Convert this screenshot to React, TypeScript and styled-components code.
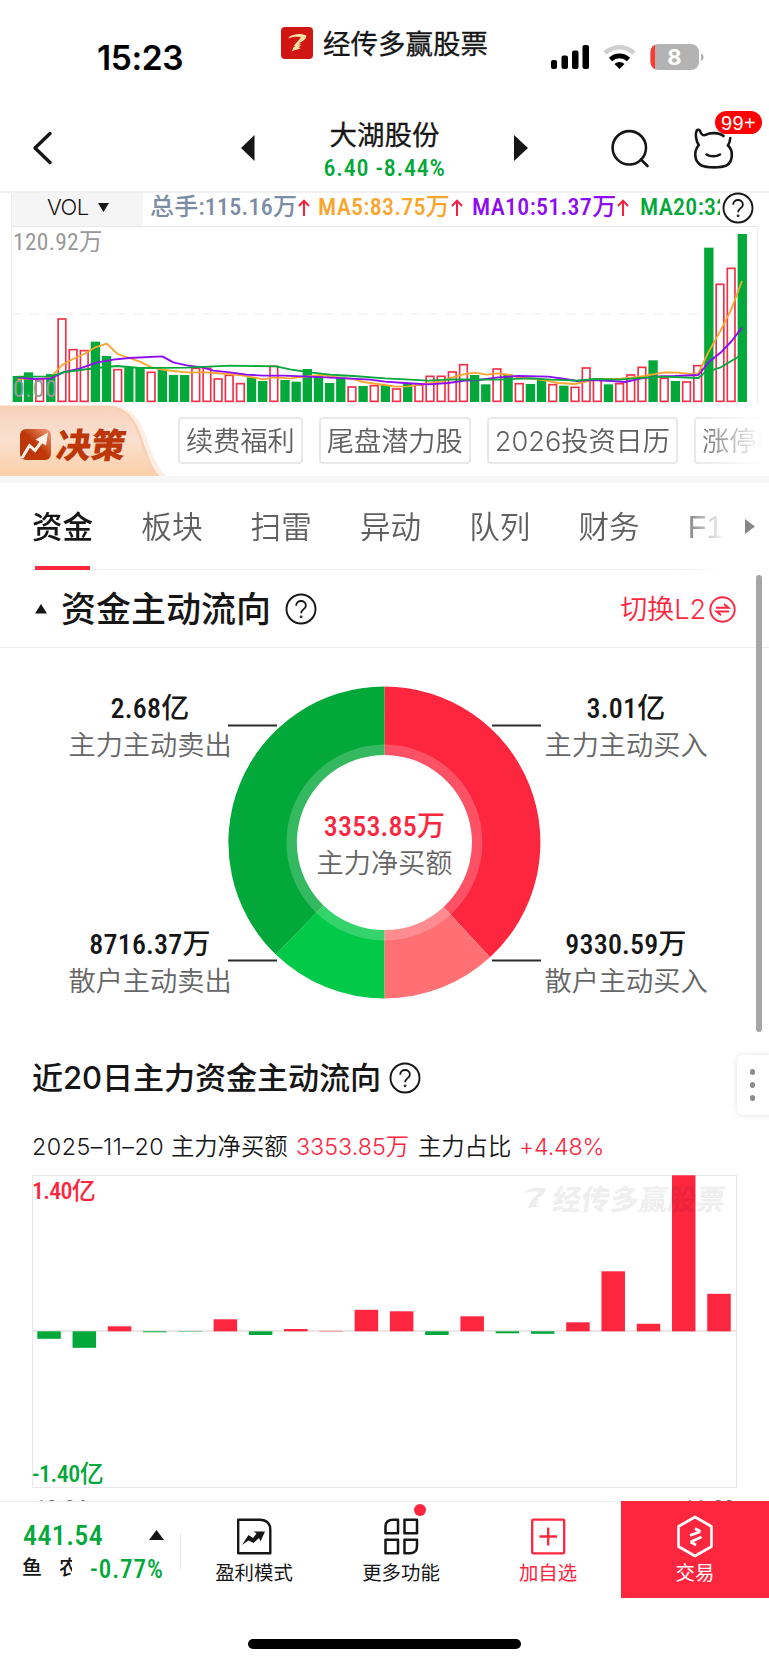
import React from "react";
import styled, { createGlobalStyle } from "styled-components";

const RED = "#fd263f";
const GREEN = "#02a83a";
const INK = "#161616";
const CJK = `"Noto Sans CJK SC", sans-serif`;

const Global = createGlobalStyle`
  html, body { margin: 0; padding: 0; background: #fff; }
  * { box-sizing: border-box; }
`;

const Screen = styled.div`
  position: relative;
  width: 769px;
  height: 1665px;
  overflow: hidden;
  background: #fff;
  color: ${INK};
  font-family: "Liberation Sans", ${CJK};
  display: flex;
  flex-direction: column;
  white-space: nowrap;
`;

const Num = styled.span<{ $size: number; $color?: string; $weight?: number; $ls?: number }>`
  font-family: Roboto, ${CJK};
  font-size: ${(p) => p.$size}px;
  font-weight: ${(p) => p.$weight ?? 470};
  font-stretch: 85%;
  letter-spacing: ${(p) => p.$ls ?? 0.008}em;
  color: ${(p) => p.$color ?? "inherit"};
`;

/* ---------- status bar ---------- */
const StatusBar = styled.div`
  height: 100px;
  display: flex;
  align-items: flex-start;
`;
const Clock = styled.div`
  width: 281px;
  padding: 38px 0 0 97px;
  font: 600 33.5px/40px Inter, sans-serif;
  letter-spacing: -0.4px;
  color: #000;
`;
const Brand = styled.div`
  width: 270px;
  padding-top: 27px;
  display: flex;
  gap: 10px;
  font: 400 27.5px/32px ${CJK};
  -webkit-text-stroke: 0.3px ${INK};
  svg { flex: none; }
  span { margin-top: -1px; }
`;
const StatusIcons = styled.svg`
  display: block;
  margin-top: 40px;
`;

/* ---------- navigation ---------- */
const Nav = styled.div`
  height: 91px;
  display: flex;
  align-items: flex-start;
  padding-top: 8px;
`;
const NavSide = styled.svg`
  display: block;
  flex: none;
`;
const StockTitle = styled.div`
  width: 259px;
  display: flex;
  flex-direction: column;
  align-items: center;
  padding-top: 7px;
  font: 400 27.5px/36px ${CJK};
  -webkit-text-stroke: 0.3px ${INK};
`;
const Quote = styled.div`
  line-height: 26px;
  -webkit-text-stroke: 0;
  color: ${GREEN};
`;
const NavActions = styled.div`
  position: relative;
  width: 241px;
  height: 83px;
`;
const Badge = styled.div`
  position: absolute;
  left: 187px;
  top: 3px;
  width: 47px;
  height: 23px;
  border-radius: 12px;
  background: #fe0302;
  color: #fff;
  font: 400 20px/24px "Liberation Sans", sans-serif;
  letter-spacing: 0.3px;
  text-align: center;
`;

/* ---------- volume chart ---------- */
const VolumePanel = styled.section`
  height: 217px;
  border-top: 2px solid #f1f1f1;
  padding-left: 11px;
`;
const IndicatorRow = styled.div`
  width: 747px;
  height: 34px;
  display: flex;
  align-items: flex-start;
  border-left: 1px solid #ededed;
  border-bottom: 1px solid #e9e9e9;
  > svg { margin: -1px 0 0 2px; }
`;
const VolSelect = styled.div`
  width: 131px;
  height: 33px;
  padding: 0 0 4px 35px;
  display: flex;
  align-items: center;
  gap: 9px;
  background: #f5f5f5;
  font: 350 22px/29px Inter, sans-serif;
  letter-spacing: -0.5px;
`;
const Indicators = styled.div`
  width: 577px;
  padding-left: 7px;
  overflow: hidden;
  display: flex;
  line-height: 29px;
`;
const Indicator = styled.div<{ $w: number; $color: string }>`
  width: ${(p) => p.$w}px;
  flex: none;
  display: flex;
  color: ${(p) => p.$color};
  svg { flex: none; margin: 6px 0 0 1px; }
`;
const ChartArea = styled.div`
  position: relative;
  width: 747px;
  height: 177px;
  border: 1px solid #f0f0f0;
  border-top: 0;
  border-bottom-color: #fafafa;
`;
const ChartSvg = styled.svg`
  position: absolute;
  left: -12px;
  top: -42px;
`;
const AxisLabel = styled.div<{ $top: number }>`
  position: absolute;
  left: 1px;
  top: ${(p) => p.$top}px;
  line-height: 26px;
  color: #999;
`;

/* ---------- strategy strip ---------- */
const Strip = styled.section`
  height: 68px;
  display: flex;
  align-items: flex-start;
`;
const Banner = styled.div`
  position: relative;
  width: 178px;
  height: 68px;
  flex: none;
  svg { position: absolute; left: 0; top: -3px; }
`;
const BannerText = styled.div`
  position: absolute;
  left: 57px;
  top: 15px;
  font: 900 34.5px/40px ${CJK};
  color: #bd3708;
  transform: skewX(-8deg);
`;
const Chips = styled.div`
  width: 591px;
  padding-top: 9px;
  display: flex;
  gap: 16px;
  overflow: hidden;
  mask-image: linear-gradient(90deg, #000 87%, transparent 99%);
`;
const Chip = styled.div`
  flex: none;
  height: 47px;
  padding: 0 6px;
  border: 2px solid #e8e8e8;
  border-radius: 4px;
  font: 350 27.2px/46px Inter, ${CJK};
  color: #606060;
`;

/* ---------- tabs ---------- */
const Tabs = styled.nav`
  height: 95px;
  border-top: 7px solid #f6f6f6;
  padding-left: 32px;
  display: flex;
`;
const TabList = styled.div`
  width: 693px;
  height: 88px;
  overflow: hidden;
  display: flex;
  mask-image: linear-gradient(90deg, #000 93%, transparent 100%);
  background: linear-gradient(#ededed, #ededed) 0 86px / 100% 1px no-repeat;
`;
const Tab = styled.div<{ $on?: boolean }>`
  position: relative;
  width: 109.3px;
  flex: none;
  height: 87px;
  font: ${(p) => (p.$on ? 500 : 350)} 30.6px/88px "Liberation Sans", ${CJK};
  color: ${(p) => (p.$on ? INK : "#606060")};
  &::after {
    content: "";
    display: ${(p) => (p.$on ? "block" : "none")};
    position: absolute;
    left: 3px;
    bottom: 0;
    width: 55px;
    height: 4px;
    background: ${RED};
  }
`;
const TabMore = styled.svg`
  margin: 36px 0 0 20px;
`;

/* ---------- sections ---------- */
const SectionHead = styled.div`
  height: 77px;
  border-bottom: 1px solid #ededed;
  padding: 0 33px 0 35px;
  display: flex;
  align-items: center;
`;
const SectionTitle = styled.h2`
  margin: -5px 0 0 14px;
  width: 224px;
  font: 500 35px/48px ${CJK};
`;
const SwitchLink = styled.div`
  margin-left: auto;
  display: flex;
  align-items: center;
  gap: 3px;
  color: ${RED};
  font: 350 27px/40px Inter, ${CJK};
  span { margin-top: 2px; }
`;

const Flow = styled.section`
  height: 396px;
  display: flex;
`;
const FlowCol = styled.div<{ $side: "l" | "r" }>`
  width: ${(p) => (p.$side === "l" ? 228 : 229)}px;
  padding: ${(p) => (p.$side === "l" ? "42px 0 0 69px" : "42px 0 0 4px")};
`;
const FlowItem = styled.div`
  height: 236px;
  width: 162px;
  display: flex;
  flex-direction: column;
  align-items: center;
`;
const FlowValue = styled.div`
  line-height: 37px;
  height: 36px;
`;
const FlowLabel = styled.div`
  font: 350 27.2px/34px ${CJK};
  color: #666;
`;
const DonutBox = styled.div`
  position: relative;
  width: 313px;
  padding-top: 38px;
  svg { display: block; }
`;
const DonutCenter = styled.div`
  position: absolute;
  inset: 160px 0 auto;
  display: flex;
  flex-direction: column;
  align-items: center;
`;

const HistoryHead = styled.div`
  height: 75px;
  padding: 0 0 7px 32px;
  display: flex;
  align-items: center;
  gap: 8px;
  h2 {
    margin: 0;
    font: 500 31.1px/44px Inter, ${CJK};
    letter-spacing: -0.1px;
  }
`;
const Summary = styled.div`
  height: 56px;
  padding-left: 32px;
  display: flex;
  gap: 9px;
  font: 350 23.3px/55px Inter, ${CJK};
`;
const Cell = styled.span<{ $w: number; $red?: boolean; $ls?: number }>`
  width: ${(p) => p.$w}px;
  flex: none;
  color: ${(p) => (p.$red ? RED : INK)};
  letter-spacing: ${(p) => p.$ls ?? 0}px;
`;
const HistoryChart = styled.div`
  position: relative;
  width: 705px;
  height: 313px;
  margin-left: 32px;
  border: 1px solid #e8e8e8;
  display: flex;
  flex-direction: column;
  justify-content: space-between;
  > svg { position: absolute; left: -1px; top: -1px; }
`;
const Bound = styled.div<{ $color: string }>`
  line-height: 30px;
  height: 28px;
  margin-left: -1px;
  color: ${(p) => p.$color};
`;
const Watermark = styled.div`
  position: absolute;
  left: 486px;
  top: 4px;
  display: flex;
  align-items: center;
  gap: 3px;
  color: rgba(0, 0, 0, 0.07);
  font: 900 28.8px/36px ${CJK};
  span { transform: skewX(-8deg); }
`;
const Dates = styled.div`
  height: 13px;
  overflow: hidden;
  padding: 5px 34px 0 35px;
  display: flex;
  justify-content: space-between;
  line-height: 32px;
  color: #666;
`;

/* ---------- bottom bar ---------- */
const BottomBar = styled.footer`
  height: 97px;
  display: flex;
  border-top: 1px solid #ececec;
`;
const IndexTicker = styled.div`
  width: 180px;
  padding: 16px 16px 0 23px;
`;
const TickerRow = styled.div`
  display: flex;
  justify-content: space-between;
  align-items: center;
  height: 34px;
  color: ${GREEN};
`;
const TickerName = styled.div<{ $w: number; $shift: number }>`
  width: ${(p) => p.$w}px;
  height: 30px;
  overflow: hidden;
  color: ${INK};
  font: 500 20px/26px ${CJK};
  span { margin-left: ${(p) => p.$shift}px; }
`;
const Divider = styled.div`
  width: 1px;
  height: 36px;
  margin-top: 31px;
  background: #e6e6e6;
`;
const Action = styled.div<{ $w: number; $color: string; $bg?: string }>`
  position: relative;
  width: ${(p) => p.$w}px;
  margin-top: -1px;
  height: 97px;
  padding-top: 11px;
  display: flex;
  flex-direction: column;
  align-items: center;
  background: ${(p) => p.$bg ?? "transparent"};
  color: ${(p) => p.$color};
  font: 400 19.4px/26px ${CJK};
  svg { display: block; height: 50px; margin-bottom: -3px; }
`;
const Dot = styled.div`
  position: absolute;
  left: 87px;
  top: 3px;
  width: 12px;
  height: 12px;
  border-radius: 50%;
  background: ${RED};
`;
const HomeIndicator = styled.div`
  width: 273px;
  height: 10px;
  margin: 41px 0 0 248px;
  border-radius: 5px;
  background: #000;
`;

/* ---------- floating parts ---------- */
const ScrollThumb = styled.div`
  position: absolute;
  left: 756px;
  top: 575px;
  width: 6px;
  height: 457px;
  border-radius: 3px;
  background: #a6a6a6;
`;
const FloatMenu = styled.div`
  position: absolute;
  left: 737px;
  top: 1055px;
  width: 40px;
  height: 60px;
  border-radius: 6px;
  background: #fff;
  box-shadow: 0 0 6px rgba(0, 0, 0, 0.12);
  padding: 14px 0 0 12.5px;
  display: flex;
  flex-direction: column;
  gap: 7.5px;
  i {
    width: 5.6px;
    height: 5.6px;
    border-radius: 50%;
    background: #8c8c8c;
  }
`;

/* volume bars: [direction, top], baseline at 650, three units per pixel */
const VOLUME: [string, number][] = [
  ["g", 573], ["g", 562], ["r", 582], ["g", 567], ["r", 400], ["r", 492], ["r", 495], ["g", 470],
  ["g", 513], ["r", 552], ["g", 547], ["g", 547], ["r", 560], ["g", 553], ["g", 570], ["g", 570],
  ["r", 548], ["r", 548], ["r", 580], ["r", 569], ["r", 594], ["g", 577], ["g", 588], ["r", 542],
  ["g", 585], ["g", 590], ["g", 552], ["g", 573], ["g", 594], ["g", 575], ["r", 604], ["g", 603],
  ["r", 600], ["g", 600], ["r", 610], ["g", 597], ["r", 598], ["r", 572], ["r", 572], ["r", 559],
  ["r", 537], ["g", 570], ["g", 598], ["r", 550], ["g", 568], ["r", 594], ["g", 597], ["g", 585],
  ["r", 597], ["g", 602], ["r", 605], ["r", 547], ["r", 580], ["g", 598], ["r", 594], ["r", 568],
  ["r", 545], ["g", 526], ["r", 578], ["g", 588], ["r", 589], ["r", 540], ["g", 188], ["r", 296],
  ["r", 248], ["g", 147],
];
const MA5 =
  "52,583 85,580 118,583 152,577 186,540 219,522 253,507 286,487 320,476 353,507 387,519 420,530 454,547 487,554 520,558 560,562 620,562 680,567 720,570 760,577 788,583 820,577 870,580 920,574 960,570 1020,578 1060,582 1090,591 1155,600 1185,605 1225,604 1275,596 1325,590 1355,578 1390,568 1425,563 1460,569 1495,565 1530,570 1555,577 1605,582 1635,586 1675,594 1725,597 1765,588 1805,582 1855,582 1915,576 1955,569 1995,562 2035,563 2070,567 2095,565 2126,500 2160,440 2193,375 2226,288";
const MA10 =
  "52,577 100,582 152,580 190,562 240,550 290,533 340,524 387,519 487,514 520,532 560,541 610,548 640,557 690,562 740,569 790,572 850,572 930,575 1040,580 1110,584 1155,590 1215,594 1285,598 1345,594 1395,587 1435,585 1495,577 1555,573 1645,575 1695,582 1730,588 1775,585 1835,588 1875,591 1925,580 1975,574 2025,573 2095,570 2126,532 2165,500 2195,468 2226,428";
const MA20 =
  "52,575 152,574 190,562 240,555 290,549 350,543 420,549 560,548 690,542 828,544 870,553 930,562 990,569 1060,573 1155,580 1215,583 1285,587 1355,583 1485,584 1595,580 1655,584 1730,587 1785,582 1855,584 1935,578 1985,575 2095,579 2115,562 2160,548 2215,515";

const FLOW20 = [
  -7.5, -16.5, 5, -1, -0.4, 12, -3.7, 2.3, 0.4, 21.5, 20, -3.7, 15, -2, -2.5, 9, 60, 7.5, 156, 37.5,
];

const Help = ({ r = 14.5, size = 22 }: { r?: number; size?: number }) => (
  <svg width="32" height="32" viewBox="-16 -16 32 32" style={{ flex: "none" }}>
    <circle r={r} fill="#fff" stroke={INK} strokeWidth="1.9" />
    <g transform={`scale(${size / 22})`} fill="none" stroke={INK} strokeWidth="1.8">
      <path d="M-4.8 -3.2C-4.8 -9.6 4.9 -9.6 4.9 -3.3C4.9 0 0.1 0.4 0.1 4.2" />
      <circle cx="0.1" cy="7.8" r="0.5" />
    </g>
  </svg>
);

const UpArrow = () => (
  <svg width="12" height="18" viewBox="0 0 12 18" fill="none" stroke="#f5203f" strokeWidth="2">
    <path d="M6 17V2M1 7L6 1.6L11 7" />
  </svg>
);

const BrandMark = ({ size, fill }: { size: number; fill: string }) => (
  <svg width={size} height={size} viewBox="3 4 26 24" fill={fill}>
    <path d="M7 11.500C10 7.500 16 6.300 25.500 7.500C25.500 11 22.500 13.800 18.500 16L20 17.200L16.500 18.800L20.500 18.800L17 21L19.500 22.200C16.500 23.800 13.500 22.800 10 24.500C12.500 22.500 11 20.500 13.500 17.500C14.500 15.500 18 13.500 19.500 10.500C15 9.500 11 10.500 7 11.500Z" />
  </svg>
);

const arc = (r0: number, r1: number, a0: number, a1: number) => {
  const p = (r: number, a: number) =>
    `${(156.4 + r * Math.sin((a * Math.PI) / 180)).toFixed(2)} ${(156.5 - r * Math.cos((a * Math.PI) / 180)).toFixed(2)}`;
  return `M${p(r1, a0)}A${r1} ${r1} 0 0 1 ${p(r1, a1)}L${p(r0, a1)}A${r0} ${r0} 0 0 0 ${p(r0, a0)}Z`;
};

const SLICES: [number, number, string][] = [
  [0, 137.4, RED],
  [137.4, 180, "#ff7075"],
  [180, 224.1, "#02c947"],
  [224.1, 360, GREEN],
];

export default function App() {
  return (
    <Screen>
      <Global />
      <StatusBar>
        <Clock>15:23</Clock>
        <Brand>
          <svg width="32" height="32" viewBox="0 0 32 32">
            <rect width="32" height="32" rx="4" fill="#d01513" />
            <path fill="#fbe3a4" d="M7 11.500C8.500 9 12 7.500 16 7.200C19.500 6.800 23 7.300 25.500 8.800C25 12.500 21.500 14.500 18 16.200L20.300 16.800L17 18.300L20.500 18.500L17.500 20.300L19.500 21.200C16.500 23.300 13.500 22.300 10.500 24.500C12 22.800 11.500 21.800 12.200 20.500L14.500 19.800L12.800 19C14 16.500 18 13.500 19.800 10.200C15.500 9.300 11 10 7 11.500Z" />
          </svg>
          <span>经传多赢股票</span>
        </Brand>
        <StatusIcons width="160" height="36" viewBox="551 40 160 36">
          <g fill="#000">
            <rect x="551" y="60" width="6" height="9" rx="2" />
            <rect x="561.500" y="55.500" width="6.500" height="13.500" rx="2" />
            <rect x="572" y="50.500" width="6.500" height="18.500" rx="2" />
            <rect x="582.500" y="45" width="6.500" height="24" rx="2" />
          </g>
          <g fill="none" strokeWidth="4.6">
            <path d="M605 53.200A20.500 20.500 0 0 1 634 53.200" stroke="#cfcfcf" />
            <path d="M610.500 59.500A13 13 0 0 1 628.500 59.500" stroke="#000" />
          </g>
          <path d="M614.500 64A7.500 7.500 0 0 1 624.500 64L619.500 69Z" fill="#000" />
          <clipPath id="bat"><rect x="650.500" y="44" width="48.500" height="26" rx="8" /></clipPath>
          <g clipPath="url(#bat)">
            <rect x="650" y="44" width="50" height="26" fill="#b3b3b3" />
            <rect x="650" y="44" width="5" height="26" fill="#fd3b30" />
          </g>
          <path d="M701 53.500C704.500 54.500 704.500 60 701 61Z" fill="#b3b3b3" />
          <text x="674.500" y="65" textAnchor="middle" fontFamily="Inter" fontWeight="700" fontSize="22" fill="#fff">8</text>
        </StatusIcons>
      </StatusBar>

      <Nav>
        <NavSide width="255" height="80" viewBox="0 108 255 80">
          <path d="M50 133.500L35 148L50 162.500" fill="none" stroke={INK} strokeWidth="3.4" strokeLinecap="round" strokeLinejoin="round" />
          <path d="M241 148L254.500 135V161Z" fill={INK} />
        </NavSide>
        <StockTitle>
          <span>大湖股份</span>
          <Quote>
            <Num $size={24} $ls={0.032}>6.40 -8.44%</Num>
          </Quote>
        </StockTitle>
        <NavSide width="14" height="80" viewBox="514 108 14 80">
          <path d="M528 148L514 135V161Z" fill={INK} />
        </NavSide>
        <NavActions>
          <svg width="241" height="83" viewBox="528 108 241 83" fill="none" stroke={INK} strokeWidth="2.6" strokeLinecap="round">
            <circle cx="629.300" cy="147.800" r="16.700" />
            <path d="M641 159.500L647.500 166" />
            <path d="M706.500 134.500C709 132.800 719 132 723.500 136M730.300 138C730 141.500 729.500 143 728 145.500C734 151 732.500 162 726.500 165.500C721 168 707 168 701.500 165.500C694 161.500 693.500 151.500 698.700 145C695.800 140.500 695 133.500 696.800 130.500C697.600 129.300 699.500 129.600 700.300 131.500C701.200 135 703.500 136 706.500 134.500" />
            <path d="M706.500 154.500C710 156.800 716.500 156.800 720 154.500" />
          </svg>
          <Badge>99+</Badge>
        </NavActions>
      </Nav>

      <VolumePanel>
        <IndicatorRow>
          <VolSelect>
            VOL
            <svg width="11" height="9" viewBox="0 0 11 9"><path d="M0 0H11L5.500 9Z" fill={INK} /></svg>
          </VolSelect>
          <Indicators>
            <Indicator $w={168} $color="#7d8ca6"><Num $size={24} $ls={0.01}>总手:115.16万</Num><UpArrow /></Indicator>
            <Indicator $w={154} $color="#f9a52e"><Num $size={24} $ls={0.012}>MA5:83.75万</Num><UpArrow /></Indicator>
            <Indicator $w={168} $color="#8d0cf2"><Num $size={24} $ls={0.012}>MA10:51.37万</Num><UpArrow /></Indicator>
            <Indicator $w={120} $color={GREEN}><Num $size={24} $ls={0.012}>MA20:32.61万</Num></Indicator>
          </Indicators>
          <Help />
        </IndicatorRow>
        <ChartArea>
          <ChartSvg width="769" height="225" viewBox="0 0 2307 675">
            <line x1="36" y1="387" x2="2274" y2="387" stroke="#ececec" strokeWidth="3" strokeDasharray="28 24" />
            {VOLUME.map(([d, y], i) => {
              const x = 38 + 33.46 * i;
              return d === "g" ? (
                <rect key={i} x={x} y={y} width="28" height={651 - y} fill={GREEN} />
              ) : (
                <rect key={i} x={x + 2.5} y={y + 2} width="23" height={647 - y} fill="#fff" stroke="#f2304a" strokeWidth="5" />
              );
            })}
            <g fill="none" strokeWidth="5.5" strokeLinejoin="round">
              <polyline points={MA5} stroke="#f9a52e" />
              <polyline points={MA10} stroke="#8d0cf2" />
              <polyline points={MA20} stroke={GREEN} />
            </g>
          </ChartSvg>
          <AxisLabel $top={2}><Num $size={23.5} $ls={0.012} $weight={400}>120.92万</Num></AxisLabel>
          <AxisLabel $top={149}><Num $size={23.5} $ls={0.04} $weight={400}>0.00</Num></AxisLabel>
        </ChartArea>
      </VolumePanel>

      <Strip>
        <Banner>
          <svg width="178" height="71" viewBox="0 -3 178 71">
            <defs>
              <linearGradient id="bn" x1="0" y1="0" x2="0" y2="1">
                <stop offset="0" stopColor="#f8d2bd" />
                <stop offset="0.45" stopColor="#fae0d0" />
                <stop offset="1" stopColor="#fbcfa8" />
              </linearGradient>
              <linearGradient id="ic" x1="0" y1="1" x2="1" y2="0">
                <stop offset="0.5" stopColor="#bd3708" />
                <stop offset="1" stopColor="#f3a07c" />
              </linearGradient>
            </defs>
            <path d="M0 -3H108C132 -3 141 13 147 31C152 46 157 58 166 68H0Z" fill="#fdeee4" />
            <path d="M0 0H108C128 0 136 12 142 31C147 46 151 60 159 68H0Z" fill="url(#bn)" />
            <path d="M0 -1H108C127 -1 135 13 141 31C146 46 150 60 158 68" fill="none" stroke="#fad0b4" strokeWidth="2.500" />
            <rect x="20" y="21" width="31" height="31" rx="6" fill="url(#ic)" />
            <path d="M22 50L29.500 37.500L35 42.500L42 33" fill="none" stroke="#fff2e8" strokeWidth="3" />
            <path d="M35.500 31.500L48 24.500L46 37.500Z" fill="#fff2e8" />
          </svg>
          <BannerText>决策</BannerText>
        </Banner>
        <Chips>
          <Chip>续费福利</Chip>
          <Chip>尾盘潜力股</Chip>
          <Chip>2026投资日历</Chip>
          <Chip>涨停棱镜</Chip>
        </Chips>
      </Strip>

      <Tabs>
        <TabList>
          <Tab $on>资金</Tab>
          <Tab>板块</Tab>
          <Tab>扫雷</Tab>
          <Tab>异动</Tab>
          <Tab>队列</Tab>
          <Tab>财务</Tab>
          <Tab>F10</Tab>
        </TabList>
        <TabMore width="10" height="15" viewBox="0 0 10 15"><path d="M0 0L10 7.500L0 15Z" fill="#868686" /></TabMore>
      </Tabs>

      <SectionHead>
        <svg width="12" height="10" viewBox="0 0 12 10"><path d="M6 0L12 9.500H0Z" fill={INK} /></svg>
        <SectionTitle>资金主动流向</SectionTitle>
        <Help />
        <SwitchLink>
          <span>切换L2</span>
          <svg width="27" height="27" viewBox="-13.500 -13.500 27 27" fill="none" stroke={RED} strokeWidth="1.900">
            <circle r="12.200" />
            <path d="M-6.500 -1.800H6L1.500 -5.500M6.500 2H-6L-1.500 5.700" />
          </svg>
        </SwitchLink>
      </SectionHead>

      <Flow>
        <FlowCol $side="l">
          <FlowItem>
            <FlowValue><Num $size={28}>2.68亿</Num></FlowValue>
            <FlowLabel>主力主动卖出</FlowLabel>
          </FlowItem>
          <FlowItem>
            <FlowValue><Num $size={28}>8716.37万</Num></FlowValue>
            <FlowLabel>散户主动卖出</FlowLabel>
          </FlowItem>
        </FlowCol>
        <DonutBox>
          <svg width="313" height="313" viewBox="0 0 313 313">
            {SLICES.map(([a, b, c]) => (
              <path key={a} d={arc(87.6, 156, a, b)} fill={c} />
            ))}
            <circle cx="156.400" cy="156.500" r="92.800" fill="none" stroke="#fff" strokeOpacity="0.2" strokeWidth="10.400" />
            <path d="M0 39.500H49M264 39.500H313M0 274.500H49M264 274.500H313" stroke="#2c2c2c" strokeWidth="2" />
          </svg>
          <DonutCenter>
            <FlowValue><Num $size={28} $color={RED}>3353.85万</Num></FlowValue>
            <FlowLabel>主力净买额</FlowLabel>
          </DonutCenter>
        </DonutBox>
        <FlowCol $side="r">
          <FlowItem>
            <FlowValue><Num $size={28}>3.01亿</Num></FlowValue>
            <FlowLabel>主力主动买入</FlowLabel>
          </FlowItem>
          <FlowItem>
            <FlowValue><Num $size={28}>9330.59万</Num></FlowValue>
            <FlowLabel>散户主动买入</FlowLabel>
          </FlowItem>
        </FlowCol>
      </Flow>

      <HistoryHead>
        <h2>近20日主力资金主动流向</h2>
        <Help />
      </HistoryHead>
      <Summary>
        <Cell $w={130} $ls={0.5}>2025–11–20</Cell>
        <Cell $w={116}>主力净买额</Cell>
        <Cell $w={113} $red>3353.85万</Cell>
        <Cell $w={92}>主力占比</Cell>
        <Cell $w={90} $red $ls={-0.2}>+4.48%</Cell>
      </Summary>
      <HistoryChart>
        <svg width="705" height="313" viewBox="32 1175 705 313">
          <line x1="32" x2="737" y1="1331" y2="1331" stroke="#e6dede" strokeWidth="1.500" />
          {FLOW20.map((v, i) => (
            <rect
              key={i}
              x={37.3 + 35.26 * i}
              y={v > 0 ? 1331.3 - v : 1331.3}
              width="23.500"
              height={Math.abs(v)}
              fill={v > 0 ? RED : GREEN}
            />
          ))}
        </svg>
        <Watermark>
          <BrandMark size={31} fill="rgba(0,0,0,0.07)" />
          <span>经传多赢股票</span>
        </Watermark>
        <Bound $color={RED}><Num $size={24} $ls={-0.03}>1.40亿</Num></Bound>
        <Bound $color={GREEN}><Num $size={24} $ls={-0.02}>-1.40亿</Num></Bound>
      </HistoryChart>
      <Dates>
        <Num $size={22}>10-24</Num>
        <Num $size={22}>11-20</Num>
      </Dates>

      <BottomBar>
        <IndexTicker>
          <TickerRow>
            <Num $size={28} $ls={0.014}>441.54</Num>
            <svg width="15" height="10" viewBox="0 0 15 10"><path d="M7.500 0L15 10H0Z" fill={INK} /></svg>
          </TickerRow>
          <TickerRow>
            <TickerName $w={19} $shift={-1}><span>鱼</span></TickerName>
            <TickerName $w={12} $shift={-1}><span>农</span></TickerName>
            <Num $size={25} $ls={0.04}>-0.77%</Num>
          </TickerRow>
        </IndexTicker>
        <Divider />
        <Action $w={146} $color={INK}>
          <svg width="36" height="50" viewBox="0 0 36 50" fill="none" stroke={INK} strokeWidth="2.400">
            <path d="M3.200 7.700H24C31 8 34.300 12 34.300 18V41.300H2.200V7.700Z" strokeLinejoin="round" />
            <path d="M6 33L12.500 23L17 26L20.500 21.500L17.500 19.500H29L24.500 29.500L23 26L17.500 31L12.500 28.500Z" fill={INK} stroke="none" />
          </svg>
          盈利模式
        </Action>
        <Action $w={148} $color={INK}>
          <svg width="36" height="50" viewBox="0 0 36 50" fill="none" stroke={INK} strokeWidth="2.500" strokeLinejoin="round">
            <path d="M15 7.700V21.300H2.500V15C2.500 10.500 5 7.700 10 7.700Z" />
            <path d="M21.500 7.700H34V21.300H21.500Z" />
            <path d="M2.500 27.700H15V41.300H2.500Z" />
            <path d="M21.500 27.700H34V34C34 39 31 41.300 26.500 41.300H21.500Z" />
          </svg>
          更多功能
          <Dot />
        </Action>
        <Action $w={146} $color={RED}>
          <svg width="36" height="50" viewBox="0 0 36 50" fill="none" stroke={RED} strokeWidth="2.300">
            <rect x="2.200" y="7.700" width="32" height="33.600" rx="1" />
            <path d="M18.200 15.500V33.500M9.500 24.500H27" />
          </svg>
          加自选
        </Action>
        <Action $w={148} $color="#fff" $bg={RED}>
          <svg width="38" height="50" viewBox="0 0 38 50" fill="none" stroke="#fff" strokeWidth="2.600" strokeLinejoin="round">
            <path d="M19 5L35.500 14.500V34.500L19 44L2.500 34.500V14.500Z" />
            <path d="M14 23.500L24.500 19.500M19 16.500L24.500 19.500M25.500 25L14.500 30M20 33L14.500 30" strokeWidth="2.600" />
          </svg>
          交易
        </Action>
      </BottomBar>
      <HomeIndicator />

      <ScrollThumb />
      <FloatMenu><i /><i /><i /></FloatMenu>
    </Screen>
  );
}
